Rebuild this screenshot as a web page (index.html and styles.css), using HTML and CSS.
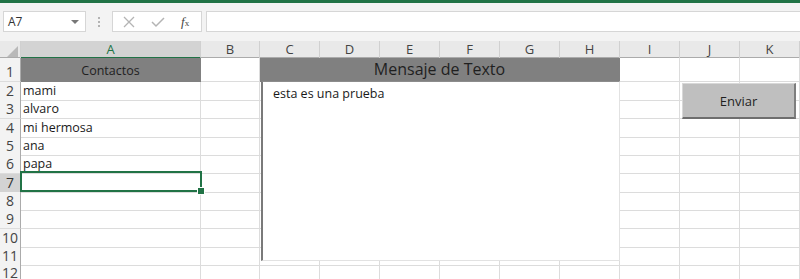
FILE: index.html
```html
<!DOCTYPE html>
<html lang="es">
<head>
  <meta charset="UTF-8">
  <title>Mensajes</title>
  <link rel="stylesheet" href="styles.css">
</head>
<body>
<div class="topbar"></div>
<div class="formula-row">
  <div class="namebox"><span>A7</span><span class="caret"></span></div>
  <div class="grip"><i></i><i></i><i></i></div>
  <div class="fx-box">
    <svg class="ico" width="12" height="12" viewBox="0 0 12 12"><path d="M1 1 L11 11 M11 1 L1 11" stroke="#b4b4b4" stroke-width="1.3" fill="none"/></svg>
    <svg class="ico" width="14" height="12" viewBox="0 0 14 12"><path d="M1 6 L5 10 L13 2" stroke="#b4b4b4" stroke-width="1.5" fill="none"/></svg>
    <span class="fx"><i>f</i><small>x</small></span>
  </div>
  <div class="formula-input"></div>
</div>

<div class="sheet">
  <div class="row colhead">
    <div class="corner"><svg width="11" height="11" viewBox="0 0 11 11"><path d="M11 0 L11 11 L0 11 Z" fill="#b9b9b9"/></svg></div>
    <div class="col active">A</div><div class="col">B</div><div class="col">C</div><div class="col">D</div><div class="col">E</div><div class="col">F</div><div class="col">G</div><div class="col">H</div><div class="col">I</div><div class="col">J</div><div class="col">K</div>
  </div>
  <div class="row r-title">
    <div class="rh">1</div>
    <div class="cell title">Contactos</div>
    <div class="cell"></div>
    <div class="cell title big">Mensaje de Texto</div>
    <div class="cell"></div><div class="cell"></div><div class="cell"></div>
  </div>
  <div class="row"><div class="rh">2</div><div class="cell">mami</div><div class="cell"></div><div class="cell"></div><div class="cell"></div><div class="cell"></div><div class="cell"></div><div class="cell"></div><div class="cell"></div><div class="cell"></div><div class="cell"></div><div class="cell"></div></div>
  <div class="row"><div class="rh">3</div><div class="cell">alvaro</div><div class="cell"></div><div class="cell"></div><div class="cell"></div><div class="cell"></div><div class="cell"></div><div class="cell"></div><div class="cell"></div><div class="cell"></div><div class="cell"></div><div class="cell"></div></div>
  <div class="row"><div class="rh">4</div><div class="cell">mi hermosa</div><div class="cell"></div><div class="cell"></div><div class="cell"></div><div class="cell"></div><div class="cell"></div><div class="cell"></div><div class="cell"></div><div class="cell"></div><div class="cell"></div><div class="cell"></div></div>
  <div class="row"><div class="rh">5</div><div class="cell">ana</div><div class="cell"></div><div class="cell"></div><div class="cell"></div><div class="cell"></div><div class="cell"></div><div class="cell"></div><div class="cell"></div><div class="cell"></div><div class="cell"></div><div class="cell"></div></div>
  <div class="row"><div class="rh">6</div><div class="cell">papa</div><div class="cell"></div><div class="cell"></div><div class="cell"></div><div class="cell"></div><div class="cell"></div><div class="cell"></div><div class="cell"></div><div class="cell"></div><div class="cell"></div><div class="cell"></div></div>
  <div class="row"><div class="rh active">7</div><div class="cell"></div><div class="cell"></div><div class="cell"></div><div class="cell"></div><div class="cell"></div><div class="cell"></div><div class="cell"></div><div class="cell"></div><div class="cell"></div><div class="cell"></div><div class="cell"></div></div>
  <div class="row"><div class="rh">8</div><div class="cell"></div><div class="cell"></div><div class="cell"></div><div class="cell"></div><div class="cell"></div><div class="cell"></div><div class="cell"></div><div class="cell"></div><div class="cell"></div><div class="cell"></div><div class="cell"></div></div>
  <div class="row"><div class="rh">9</div><div class="cell"></div><div class="cell"></div><div class="cell"></div><div class="cell"></div><div class="cell"></div><div class="cell"></div><div class="cell"></div><div class="cell"></div><div class="cell"></div><div class="cell"></div><div class="cell"></div></div>
  <div class="row"><div class="rh">10</div><div class="cell"></div><div class="cell"></div><div class="cell"></div><div class="cell"></div><div class="cell"></div><div class="cell"></div><div class="cell"></div><div class="cell"></div><div class="cell"></div><div class="cell"></div><div class="cell"></div></div>
  <div class="row"><div class="rh">11</div><div class="cell"></div><div class="cell"></div><div class="cell"></div><div class="cell"></div><div class="cell"></div><div class="cell"></div><div class="cell"></div><div class="cell"></div><div class="cell"></div><div class="cell"></div><div class="cell"></div></div>
  <div class="row last"><div class="rh">12</div><div class="cell"></div><div class="cell"></div><div class="cell"></div><div class="cell"></div><div class="cell"></div><div class="cell"></div><div class="cell"></div><div class="cell"></div><div class="cell"></div><div class="cell"></div><div class="cell"></div></div>

  <!-- objects floating over the grid -->
  <div class="textbox">esta es una prueba</div>
  <button class="send">Enviar</button>
  <div class="selection"><span class="handle"></span></div>
</div>
</body>
</html>
```

FILE: styles.css
```css
body {
  margin: 0;
  width: 800px;
  height: 279px;
  overflow: hidden;
  background: #fff;
  font-family: "Open Sans", "Noto Sans", sans-serif;
  color: #1a1a1a;
}

.topbar {
  height: 3px;
  background: #217346;
}

.formula-row {
  height: 38px;
  box-sizing: border-box;
  padding: 8px 0 0 3px;
  background: #f3f3f3;
  display: flex;
  align-items: flex-start;
}

.namebox, .fx-box, .formula-input {
  height: 21px;
  box-sizing: border-box;
  background: #fff;
  border: 1px solid #d6d6d6;
}

.namebox {
  width: 83px;
  display: flex;
  align-items: center;
  justify-content: space-between;
  padding: 0 6px 0 4px;
  font-size: 12px;
  color: #333;
}

.caret {
  width: 0;
  height: 0;
  border-left: 4px solid transparent;
  border-right: 4px solid transparent;
  border-top: 4px solid #777;
}

.grip {
  width: 26px;
  display: flex;
  flex-direction: column;
  align-items: center;
  gap: 2px;
  padding-top: 6px;
}

.grip i {
  width: 2px;
  height: 2px;
  background: #b3b3b3;
}

.fx-box {
  width: 90px;
  display: flex;
  align-items: center;
  padding-left: 10px;
  gap: 16px;
}

.fx {
  font-family: "Liberation Serif", serif;
  font-size: 13px;
  color: #444;
}

.fx small {
  font-size: 9px;
}

.formula-input {
  flex: 1;
  margin-left: 4px;
  border-right: 0;
}

.sheet {
  position: relative;
}

.row {
  display: grid;
  grid-template-columns: 21px 180px 59px repeat(9, 60px);
  height: 18.333px;
}

.colhead {
  height: 16px;
  background: #e9e9e9;
  border-bottom: 1px solid #ababab;
}

.corner {
  display: flex;
  align-items: flex-end;
  justify-content: flex-end;
  padding: 0 2px 2px 0;
  border-right: 1px solid #d0d0d0;
}

.col {
  font-size: 13px;
  line-height: 16px;
  text-align: center;
  color: #444;
  border-right: 1px solid #d0d0d0;
}

.col.active {
  background: #d3d3d3;
  color: #217346;
  border-bottom: 2px solid #217346;
}

.r-title {
  height: 24px;
}

.rh {
  font-size: 14px;
  color: #444;
  text-align: center;
  background: #f3f3f3;
  border-right: 1px solid #ababab;
  border-bottom: 1px solid #dcdcdc;
  display: flex;
  align-items: flex-end;
  justify-content: center;
  line-height: 18px;
}

.last .rh {
  align-items: flex-start;
  line-height: 16px;
}

.rh.active {
  background: #d3d3d3;
  color: #333;
}

.cell {
  box-sizing: border-box;
  border-right: 1px solid #dcdcdc;
  border-bottom: 1px solid #dcdcdc;
  font-size: 12.5px;
  line-height: 17px;
  padding-left: 2px;
  white-space: nowrap;
}

.title {
  background: #808080;
  border-color: #808080;
  display: flex;
  align-items: flex-end;
  justify-content: center;
  padding: 0 0 2px;
  color: #1f1f1f;
}

.title.big {
  grid-column: span 6;
  align-items: center;
  padding: 0;
  font-size: 16px;
}

.textbox {
  position: absolute;
  left: 261px;
  top: 40px;
  width: 359px;
  height: 180px;
  box-sizing: border-box;
  background: #fff;
  border: 1px solid #e2e2e2;
  border-left: 2px solid #7a7a7a;
  border-top: 1px solid #8c8c8c;
  padding: 3px 10px;
  font-size: 12.5px;
  color: #1a1a1a;
}

.send {
  position: absolute;
  left: 682px;
  top: 42px;
  width: 114px;
  height: 36px;
  background: #bfbfbf;
  border: 1px solid #d8d8d8;
  border-right: 2px solid #7e7e7e;
  border-bottom: 2px solid #6e6e6e;
  font-family: "Open Sans", "Noto Sans", sans-serif;
  font-size: 13px;
  color: #1f1f1f;
  padding: 0;
}

.selection {
  position: absolute;
  left: 20px;
  top: 130px;
  width: 182px;
  height: 21px;
  box-sizing: border-box;
  border: 2px solid #217346;
}

.handle {
  position: absolute;
  right: -5px;
  bottom: -5px;
  width: 6px;
  height: 6px;
  background: #217346;
  border: 1px solid #fff;
}
```
